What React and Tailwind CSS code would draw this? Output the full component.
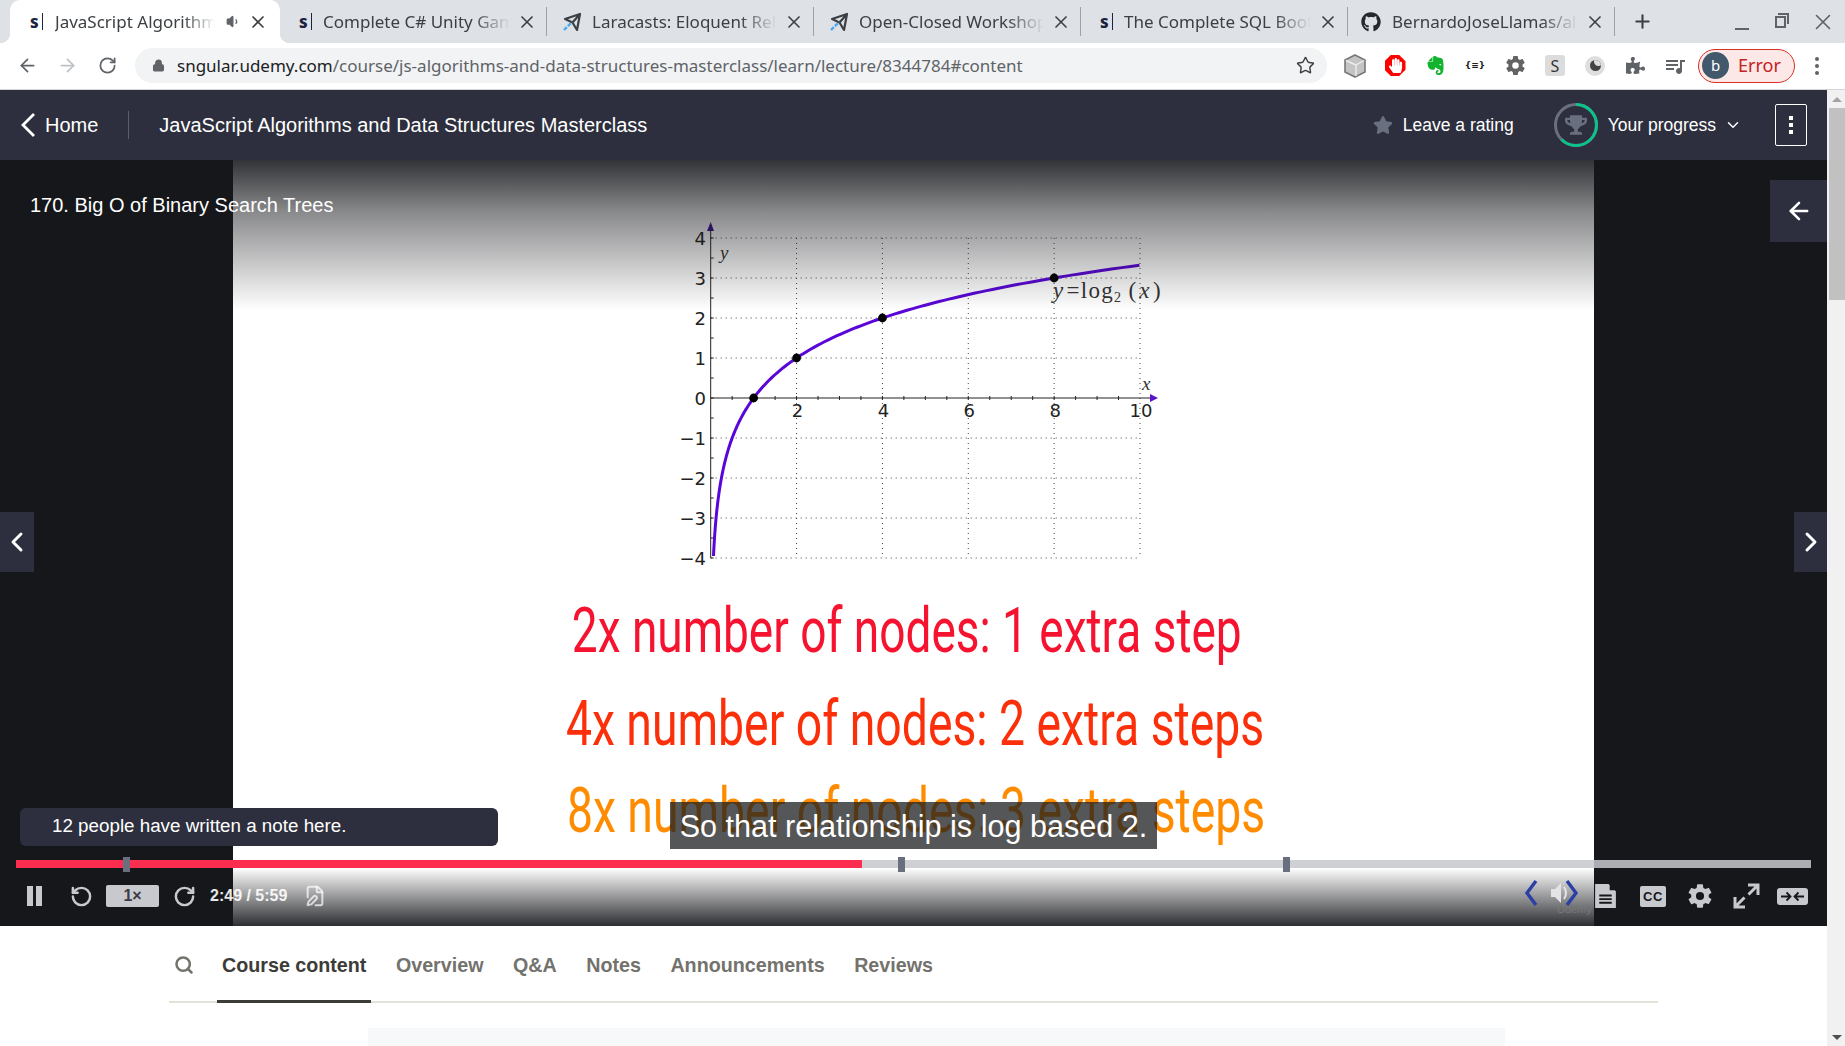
import { ArrowLeft, ArrowRight, ChevronDown, ChevronLeft, ChevronRight, FilePen, RotateCcw, RotateCw, Search, Star, Lock, X, Plus, Volume1 } from "lucide-react";
import { FaGithub, FaHandPaper, FaPuzzlePiece, FaStar, FaTrophy } from "react-icons/fa";
import { IoSettingsSharp } from "react-icons/io5";
import { MdQueueMusic } from "react-icons/md";
import { SiEvernote } from "react-icons/si";

const px = (x) => 50.7 + 42.93 * x;
const py = (y) => 188 - 40 * y;

function curvePath() {
    let d = "";
    for (let i = 0; i <= 240; i++) {
        const y = -3.95 + (i / 240) * 7.27;
        d += `${i === 0 ? "M" : "L"}${px(Math.pow(2, y)).toFixed(2)} ${py(y).toFixed(2)} `;
    }
    return d;
}

function Chart() {
    const halves = [];
    for (let i = 1; i < 20; i++) halves.push(i / 2);
    const ys = [];
    for (let i = -8; i <= 8; i++) ys.push(i / 2);
    return (
        <svg width="520" height="370" viewBox="0 0 520 370" className="ml-[13px] shrink-0">
            {[4, 3, 2, 1, -1, -2, -3, -4].map((v) => (
                <line key={v} x1={px(0)} x2={px(10)} y1={py(v)} y2={py(v)} stroke="#444" strokeWidth="1" strokeDasharray="1 4" />
            ))}
            {[2, 4, 6, 8, 10].map((v) => (
                <line key={v} x1={px(v)} x2={px(v)} y1={py(4)} y2={py(-4)} stroke="#444" strokeWidth="1" strokeDasharray="1 4" />
            ))}
            <line x1={px(0)} x2="492" y1={py(0)} y2={py(0)} stroke="#222" strokeWidth="1" />
            <line x1={px(0)} x2={px(0)} y1="16" y2={py(-4)} stroke="#222" strokeWidth="1" />
            {halves.map((v) => (
                <line key={v} x1={px(v)} x2={px(v)} y1={py(0) - 2} y2={py(0) + 2} stroke="#222" strokeWidth="1" />
            ))}
            {ys.map((v) => (
                <line key={v} x1={px(0)} x2={px(0) + 3} y1={py(v)} y2={py(v)} stroke="#222" strokeWidth="1" />
            ))}
            <polygon points="47,21 54,21 50.7,12" fill="#3d108f" />
            <polygon points="490,184 490,192 498,188" fill="#5a12c9" />
            <path d={curvePath()} fill="none" stroke="#5a06d8" strokeWidth="3" />
            {[1, 2, 4, 8].map((v) => (
                <circle key={v} cx={px(v)} cy={py(Math.log2(v))} r="4.4" fill="#000" />
            ))}
            <g fontFamily="'DejaVu Sans', sans-serif" fontSize="18" fill="#222">
                {[4, 3, 2, 1, 0, -1, -2, -3, -4].map((v) => (
                    <text key={v} x="46" y={py(v) + 7} textAnchor="end">
                        {v < 0 ? `−${-v}` : v}
                    </text>
                ))}
                {[2, 4, 6, 8, 10].map((v) => (
                    <text key={v} x={px(v) + 1} y="207" textAnchor="middle">
                        {v}
                    </text>
                ))}
            </g>
            <g fontFamily="'Liberation Serif', serif" fill="#333">
                <text x="60" y="49" fontStyle="italic" fontSize="19">y</text>
                <text x="482" y="180" fontStyle="italic" fontSize="19">x</text>
                <text x="393" y="88" fontSize="23" letterSpacing="1.3">
                    <tspan fontStyle="italic">y</tspan>
                    <tspan dx="2">=log</tspan>
                    <tspan fontSize="14" dy="4">2</tspan>
                    <tspan dy="-4" dx="6">(</tspan>
                    <tspan fontStyle="italic" dx="2">x</tspan>
                    <tspan dx="2">)</tspan>
                </text>
            </g>
        </svg>
    );
}

function UdemyIcon() {
    return (
        <span className="flex w-[13px] shrink-0 items-center border-r border-[#1c2340] font-['Noto_Sans'] text-[17px] leading-[17px] font-extrabold text-[#1c2340]">
            s
        </span>
    );
}

function PlaneIcon() {
    return (
        <svg width="20" height="20" viewBox="0 0 20 20" className="shrink-0">
            <path d="M3 7 L18 2 L15 18 L10.5 10.5 Z M10.5 10.5 L18 2" fill="none" stroke="#3c4043" strokeWidth="2.2" strokeLinejoin="round" />
            <path d="M2 18 L10 10" stroke="#4aa8f0" strokeWidth="2.4" strokeDasharray="4 1.5" />
        </svg>
    );
}

const tabs = [
    { title: "Complete C# Unity Game Developer", icon: <UdemyIcon />, pad: "pl-[19px]", gap: "ml-[11px]" },
    { title: "Laracasts: Eloquent Relationships", icon: <PlaneIcon />, pad: "pl-[15px]", gap: "ml-[10px]" },
    { title: "Open-Closed Workshop", icon: <PlaneIcon />, pad: "pl-[15px]", gap: "ml-[10px]" },
    { title: "The Complete SQL Bootcamp", icon: <UdemyIcon />, pad: "pl-[19px]", gap: "ml-[11px]" },
    { title: "BernardoJoseLlamas/algorithms", icon: <FaGithub className="h-[20px] w-[20px] shrink-0 text-[#24292e]" />, pad: "pl-[13px]", gap: "ml-[11px]" },
];

function TabBar() {
    return (
        <div className="flex h-[43px] shrink-0 items-center bg-[#dee1e6] pl-[13px] font-['Noto_Sans'] text-[17px] text-[#3c4043]">
            <div className="relative -ml-[3px] flex h-full w-[270px] items-center rounded-t-[10px] bg-white pl-[20px]">
                <span className="absolute bottom-0 -left-[10px] h-[10px] w-[10px] bg-[radial-gradient(circle_at_0_0,#dee1e6_10px,white_10.5px)]"></span>
                <span className="absolute -right-[10px] bottom-0 h-[10px] w-[10px] bg-[radial-gradient(circle_at_100%_0,#dee1e6_10px,white_10.5px)]"></span>
                <UdemyIcon />
                <span className="ml-[12px] w-[160px] overflow-hidden whitespace-nowrap [mask-image:linear-gradient(to_right,black_80%,transparent)]">
                    JavaScript Algorithms and Data
                </span>
                <Volume1 className="ml-[11px] h-[15px] w-[15px] fill-[#5f6368] text-[#5f6368]" />
                <X className="ml-[7px] h-[20px] w-[20px] text-[#3c4043]" strokeWidth={2} />
            </div>
            {tabs.map((t) => (
                <div key={t.title} className={`flex h-[29px] w-[267px] shrink-0 items-center border-r border-[#9ea1a6] pr-[9px] ${t.pad}`}>
                    {t.icon}
                    <span className={`${t.gap} min-w-0 flex-1 overflow-hidden whitespace-nowrap [mask-image:linear-gradient(to_right,black_80%,transparent)]`}>
                        {t.title}
                    </span>
                    <X className="ml-[7px] h-[20px] w-[20px] shrink-0 text-[#3c4043]" strokeWidth={2} />
                </div>
            ))}
            <Plus className="ml-[17px] h-[21px] w-[21px] text-[#3c4043]" strokeWidth={2.4} />
            <div className="ml-[82px] h-[2px] w-[14px] translate-y-[7px] bg-[#5f6368]"></div>
            <div className="relative ml-[26px] h-[12px] w-[11px] border-2 border-[#5f6368]">
                <span className="absolute -top-[5px] -right-[5px] h-[11px] w-[11px] border-t-2 border-r-2 border-[#5f6368]"></span>
            </div>
            <X className="ml-[24px] h-[26px] w-[26px] text-[#5f6368]" strokeWidth={1.5} />
        </div>
    );
}

function ExtSlot({ children }) {
    return <div className="flex h-[40px] w-[40px] items-center justify-center">{children}</div>;
}

function Toolbar() {
    return (
        <div className="flex h-[47px] shrink-0 items-center border-b border-[#d4d5d8] bg-white pl-[7px] pb-[1px]">
            <div className="flex h-[40px] w-[40px] items-center justify-center">
                <ArrowLeft className="h-[21px] w-[21px] text-[#5f6368]" strokeWidth={2} />
            </div>
            <div className="flex h-[40px] w-[40px] items-center justify-center">
                <ArrowRight className="h-[21px] w-[21px] text-[#bdc1c6]" strokeWidth={2} />
            </div>
            <div className="flex h-[40px] w-[41px] items-center justify-center">
                <RotateCw className="h-[19px] w-[19px] text-[#5f6368]" strokeWidth={2.2} />
            </div>
            <div className="ml-[7px] flex h-[35px] w-[1192px] items-center rounded-full bg-[#f1f3f4] pl-[17px] font-['Noto_Sans'] text-[17px]">
                <Lock className="h-[13px] w-[13px] fill-[#5f6368] text-[#5f6368]" strokeWidth={2.4} />
                <span className="ml-[12px] text-[#202124]">sngular.udemy.com</span>
                <span className="text-[#5f6368]">/course/js-algorithms-and-data-structures-masterclass/learn/lecture/8344784#content</span>
                <Star className="mr-[12px] ml-auto h-[19px] w-[19px] text-[#3c4043]" strokeWidth={1.8} />
            </div>
            <div className="ml-[8px] flex items-center">
                <ExtSlot>
                    <svg width="22" height="24" viewBox="0 0 22 24">
                        <path d="M11 1 L21 6 V18 L11 23 L1 18 V6 Z" fill="#c4c4c4" stroke="#77787a" strokeWidth="1.6" />
                        <path d="M2 6.5 L12 11 V22 M12 11 L20 6.5" fill="none" stroke="#eee" strokeWidth="1.4" />
                    </svg>
                </ExtSlot>
                <ExtSlot>
                    <div className="flex h-[21px] w-[21px] items-center justify-center bg-[#f00] [clip-path:polygon(30%_0,70%_0,100%_30%,100%_70%,70%_100%,30%_100%,0_70%,0_30%)]">
                        <FaHandPaper className="h-[15px] w-[15px] text-white" />
                    </div>
                </ExtSlot>
                <ExtSlot>
                    <SiEvernote className="h-[21px] w-[19px] text-[#14b32e]" />
                </ExtSlot>
                <ExtSlot>
                    <span className="font-['DejaVu_Sans'] text-[9px] font-bold text-[#222]">{"{≡}"}</span>
                </ExtSlot>
                <ExtSlot>
                    <IoSettingsSharp className="h-[21px] w-[21px] text-[#636363]" />
                </ExtSlot>
                <ExtSlot>
                    <div className="flex h-[21px] w-[20px] items-center justify-center rounded-[3px] bg-[#dcdcdc] font-['Noto_Sans'] text-[16px] text-[#333]">S</div>
                </ExtSlot>
                <ExtSlot>
                    <div className="flex h-[20px] w-[20px] items-center justify-center rounded-full bg-[#dedede]">
                        <div className="relative h-[11px] w-[11px] overflow-hidden rounded-full bg-[#444]">
                            <span className="absolute -top-[3px] -right-[2px] h-[9px] w-[9px] rounded-full bg-[#dedede]"></span>
                        </div>
                    </div>
                </ExtSlot>
                <ExtSlot>
                    <FaPuzzlePiece className="h-[19px] w-[19px] text-[#5f6368]" />
                </ExtSlot>
                <ExtSlot>
                    <MdQueueMusic className="h-[24px] w-[24px] text-[#5f6368]" />
                </ExtSlot>
            </div>
            <div className="ml-[3px] flex h-[34px] w-[97px] items-center rounded-full border border-[#d93025] bg-[#fce8e6] pl-[3px] font-['Noto_Sans'] text-[18px] text-[#c5221f]">
                <span className="flex h-[27px] w-[27px] items-center justify-center rounded-full bg-[#41596b] text-[15px] text-white">b</span>
                <span className="ml-[9px]">Error</span>
            </div>
            <div className="ml-[20px] flex flex-col gap-[3px]">
                <span className="h-[4px] w-[4px] rounded-full bg-[#5f6368]"></span>
                <span className="h-[4px] w-[4px] rounded-full bg-[#5f6368]"></span>
                <span className="h-[4px] w-[4px] rounded-full bg-[#5f6368]"></span>
            </div>
        </div>
    );
}

function CourseHeader() {
    return (
        <div className="flex h-[70px] shrink-0 items-center bg-[#2d2f3e] pl-[20px] font-['Liberation_Sans'] text-white">
            <svg width="16" height="26" viewBox="0 0 16 26">
                <path d="M14 2 L3 13 L14 24" fill="none" stroke="white" strokeWidth="2.8" />
            </svg>
            <span className="ml-[9px] text-[20px]">Home</span>
            <div className="ml-[30px] h-[28px] w-px bg-[#5b5d6a]"></div>
            <span className="ml-[30px] text-[20px]">JavaScript Algorithms and Data Structures Masterclass</span>
            <FaStar className="ml-auto h-[20px] w-[20px] text-[#6a6f7f]" />
            <span className="ml-[10px] text-[17.5px]">Leave a rating</span>
            <div className="relative ml-[40px] flex h-[44px] w-[44px] items-center justify-center">
                <svg width="44" height="44" viewBox="0 0 44 44" className="absolute inset-0">
                    <circle cx="22" cy="22" r="20.5" fill="none" stroke="#6a6f7f" strokeWidth="3" />
                    <circle cx="22" cy="22" r="20.5" fill="none" stroke="#0bc28a" strokeWidth="3" strokeDasharray="80 129" transform="rotate(-90 22 22)" />
                </svg>
                <FaTrophy className="h-[22px] w-[22px] text-[#6a6f7f]" />
            </div>
            <span className="ml-[10px] text-[17.5px]">Your progress</span>
            <ChevronDown className="ml-[8px] h-[18px] w-[18px]" strokeWidth={2} />
            <div className="mr-[20px] ml-[33px] flex h-[42px] w-[32px] flex-col items-center justify-center gap-[3px] rounded-[2px] border border-white">
                <span className="h-[4px] w-[4px] bg-white"></span>
                <span className="h-[4px] w-[4px] bg-white"></span>
                <span className="h-[4px] w-[4px] bg-white"></span>
            </div>
        </div>
    );
}

function Slide() {
    return (
        <div className="relative flex w-[1361px] flex-col items-center overflow-hidden bg-white pt-[50px]">
            <Chart />
            <div className="mt-[19px] translate-x-[-7px] scale-x-[0.73] font-['Roboto'] text-[63px] leading-[63px] whitespace-nowrap text-[#f5132f]">
                2x number of nodes: 1 extra step
            </div>
            <div className="mt-[30px] translate-x-[2px] scale-x-[0.735] font-['Roboto'] text-[63px] leading-[63px] whitespace-nowrap text-[#fb2f09]">
                4x number of nodes: 2 extra steps
            </div>
            <div className="mt-[24px] translate-x-[3px] scale-x-[0.735] font-['Roboto'] text-[63px] leading-[63px] whitespace-nowrap text-[#ff8c00]">
                8x number of nodes: 3 extra steps
            </div>
            <div className="absolute inset-x-0 top-0 h-[150px] bg-[linear-gradient(to_bottom,rgba(22,23,27,0.88),rgba(22,23,27,0.5)_35%,rgba(22,23,27,0))]"></div>
            <div className="absolute inset-x-0 bottom-0 h-[58px] bg-[linear-gradient(to_top,rgba(22,23,27,0.9),rgba(22,23,27,0))]"></div>
            <svg width="72" height="40" viewBox="0 0 72 40" className="absolute right-[2px] bottom-[10px]">
                <path d="M16 5 L7 17 L16 29" fill="none" stroke="#2b3fa6" strokeWidth="3.4" />
                <path d="M47 5 L56 17 L47 29" fill="none" stroke="#2b3fa6" strokeWidth="3.4" />
                <path d="M31 13 h4 l6 -6 v20 l-6 -6 h-4 Z" fill="#e4e4e6" />
                <path d="M44 11 q4 6 0 12" fill="none" stroke="#e4e4e6" strokeWidth="2" />
                <text x="37" y="37" fontSize="11" fontFamily="'Liberation Sans', sans-serif" fill="#77787c">Udemy</text>
            </svg>
        </div>
    );
}

function VideoControls() {
    return (
        <div className="absolute inset-x-0 bottom-0 h-[66px] font-['Liberation_Sans']">
            <div className="relative mx-[16px] flex h-[8px] bg-[#c7c8cd]/85">
                <div className="w-[846px] bg-[#fc2d4f]"></div>
                <span className="absolute -top-[3px] left-[107px] h-[15px] w-[7px] bg-[#6a6f7f]"></span>
                <span className="absolute -top-[3px] left-[882px] h-[15px] w-[7px] bg-[#6a6f7f]"></span>
                <span className="absolute -top-[3px] left-[1267px] h-[15px] w-[7px] bg-[#6a6f7f]"></span>
            </div>
            <div className="mt-[8px] flex h-[40px] items-center pr-[19px] pl-[27px] text-[#c8c9ce]">
                <div className="flex w-[15px] justify-between">
                    <span className="h-[20px] w-[6px] bg-[#c8c9ce]"></span>
                    <span className="h-[20px] w-[6px] bg-[#c8c9ce]"></span>
                </div>
                <RotateCcw className="ml-[28px] h-[23px] w-[23px]" strokeWidth={2.6} />
                <div className="ml-[13px] flex h-[22px] w-[53px] items-center justify-center rounded-[2px] bg-[#c8c9ce] text-[16px] font-bold text-[#3a3b45]">1×</div>
                <RotateCw className="ml-[14px] h-[23px] w-[23px]" strokeWidth={2.6} />
                <span className="ml-[14px] text-[16px] font-bold text-white/90">2:49 / 5:59</span>
                <FilePen className="ml-[17px] h-[22px] w-[22px] text-white/70" strokeWidth={2.2} />
                <svg width="23" height="26" viewBox="0 0 22 25" className="ml-auto">
                    <path d="M1 1 H14 L21 8 V24 H1 Z" fill="#c8c9ce" />
                    <path d="M15 0 L22 7 H15 Z" fill="#16171b" />
                    <path d="M5 12 H17 M5 15.5 H17 M5 19 H17" stroke="#16171b" strokeWidth="1.8" />
                </svg>
                <div className="ml-[23px] flex h-[21px] w-[26px] items-center justify-center rounded-[2px] bg-[#c8c9ce] text-[13px] leading-none font-bold tracking-[0.5px] text-[#16171b]">CC</div>
                <IoSettingsSharp className="ml-[21px] h-[26px] w-[26px]" />
                <svg width="27" height="26" viewBox="0 0 27 26" className="ml-[20px]">
                    <path d="M15 2 H25 V12 M25 2 L15.5 11.5 M12 24 H2 V14 M2 24 L11.5 14.5" fill="none" stroke="#c8c9ce" strokeWidth="3" />
                </svg>
                <div className="ml-[17px] flex h-[17px] w-[31px] items-center justify-center rounded-[3px] bg-[#c8c9ce]">
                    <svg width="25" height="11" viewBox="0 0 25 11">
                        <path d="M1 5.5 H10 M6.5 1.5 L10.5 5.5 L6.5 9.5 M24 5.5 H15 M18.5 1.5 L14.5 5.5 L18.5 9.5" fill="none" stroke="#16171b" strokeWidth="1.8" />
                    </svg>
                </div>
            </div>
        </div>
    );
}

function VideoPlayer() {
    return (
        <div className="relative flex h-[766px] shrink-0 justify-center bg-[#16171b]">
            <Slide />
            <div className="absolute top-[30px] left-[30px] font-['Liberation_Sans'] text-[20px] text-white">170. Big O of Binary Search Trees</div>
            <div className="absolute top-[20px] right-0 flex h-[62px] w-[57px] items-center justify-center bg-[#2d2f3e]">
                <ArrowLeft className="h-[28px] w-[28px] text-white" strokeWidth={2.2} />
            </div>
            <div className="absolute top-[352px] left-0 flex h-[60px] w-[34px] items-center justify-center bg-[#2d2f3e]">
                <ChevronLeft className="h-[32px] w-[32px] text-white" strokeWidth={2.2} />
            </div>
            <div className="absolute top-[352px] right-0 flex h-[60px] w-[33px] items-center justify-center bg-[#2d2f3e]">
                <ChevronRight className="h-[32px] w-[32px] text-white" strokeWidth={2.2} />
            </div>
            <div className="absolute top-[648px] left-[20px] flex h-[38px] w-[478px] items-center rounded-[6px] bg-[#2d2f3e] pb-[2px] pl-[32px] font-['Liberation_Sans'] text-[18.8px] text-white">
                12 people have written a note here.
            </div>
            <div className="absolute top-[642px] left-[670px] flex h-[47px] w-[487px] items-center justify-center bg-[#1c1d1f]/75 pt-[3px] font-['Liberation_Sans'] text-[30.6px] whitespace-nowrap text-white">
                So that relationship is log based 2.
            </div>
            <VideoControls />
        </div>
    );
}

function CourseTabs() {
    const items = ["Overview", "Q&A", "Notes", "Announcements", "Reviews"];
    return (
        <div className="min-h-0 flex-1 bg-white font-['Liberation_Sans']">
            <div className="mx-[169px] flex h-[77px] border-b-2 border-[#e2e2d8] text-[19.7px] font-bold text-[#73726c]">
                <div className="flex items-center pl-[5px]">
                    <Search className="-mb-[2px] h-[20px] w-[20px] text-[#73726c]" strokeWidth={3} />
                </div>
                <div className="ml-[23px] -mb-[2px] flex gap-[19.5px]">
                    <div className="flex h-[77px] items-center border-b-[3px] border-[#3c3b37] px-[5px] pt-[6px] text-[#3c3b37]">Course content</div>
                    {items.map((item) => (
                        <div key={item} className="flex h-[77px] items-center border-b-[3px] border-transparent px-[5px] pt-[6px]">
                            {item}
                        </div>
                    ))}
                </div>
            </div>
            <div className="mt-[25px] ml-[368px] h-[18px] w-[1137px] bg-[#f7f8fa]"></div>
        </div>
    );
}

function Scrollbar() {
    return (
        <div className="flex w-[18px] shrink-0 flex-col bg-[#f1f1f1]">
            <div className="flex h-[18px] items-center justify-center pl-[2px]">
                <span className="h-0 w-0 border-x-[5px] border-b-[5px] border-x-transparent border-b-[#a3a3a3]"></span>
            </div>
            <div className="ml-[2px] h-[192px] bg-[#c1c1c1]"></div>
            <div className="mt-auto flex h-[18px] items-center justify-center pl-[2px]">
                <span className="h-0 w-0 border-x-[5px] border-t-[5px] border-x-transparent border-t-[#505050]"></span>
            </div>
        </div>
    );
}

export default function App() {
    return (
        <div className="flex h-screen flex-col overflow-hidden bg-white">
            <TabBar />
            <Toolbar />
            <div className="flex min-h-0 flex-1">
                <div className="flex min-w-0 flex-1 flex-col">
                    <CourseHeader />
                    <VideoPlayer />
                    <CourseTabs />
                </div>
                <Scrollbar />
            </div>
        </div>
    );
}
